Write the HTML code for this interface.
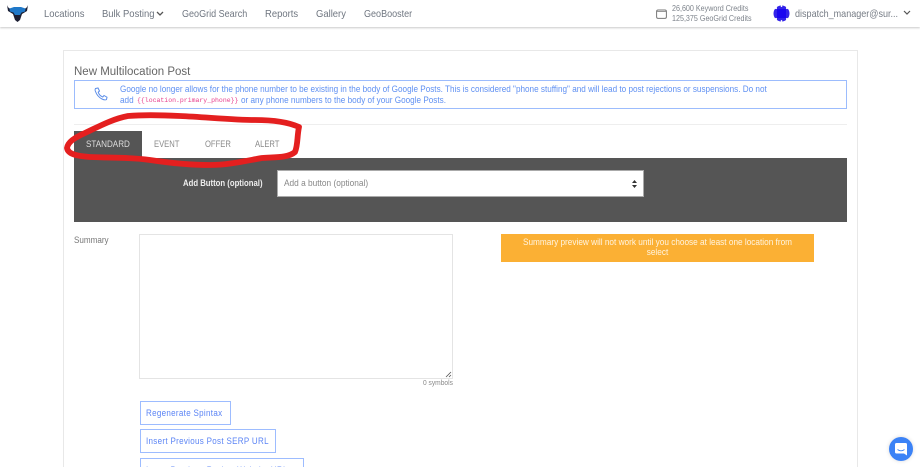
<!DOCTYPE html>
<html><head><meta charset="utf-8"><style>
html,body{margin:0;padding:0;width:920px;height:467px;overflow:hidden;background:#fff}
body{font-family:"Liberation Sans",sans-serif;position:relative}
.a{position:absolute;white-space:nowrap}
.n{top:8px;font-size:10.500px;line-height:12px;color:#6f7680;transform:scaleX(.9);transform-origin:0 50%}
.t{top:139px;font-size:9.200px;line-height:11px;color:#8a8a8a;transform:scaleX(.83);transform-origin:0 50%}
.b{border:1.500px solid #9dbcff;box-sizing:border-box;background:#fff}
.b span{position:absolute;left:4.500px;top:4.500px;line-height:12px;color:#5b84f5;font-size:9px;letter-spacing:.35px;transform:scaleX(.89);transform-origin:0 50%}
.m{font-size:9.250px;line-height:11px;color:#5f90f2;transform:scaleX(.882);transform-origin:0 50%}
#w{position:absolute;left:0;top:0;width:920px;height:467px;filter:blur(.35px)}
</style></head><body><div id="w">
<div class="a" style="left:0;top:0;width:920px;height:27px;background:#fff;box-shadow:0 1px 2px rgba(0,0,0,.22)"></div>
<svg class="a" style="left:7px;top:5px" width="21" height="17" viewBox="0 0 21 17"><path d="M0 0 C1 3 3 4 5 4 L16 4 C18 4 20 3 21 0 L20 6 L15 9 L13 15 L10.500 17 L8 15 L6 9 L1 6Z" fill="#1c1f33"/><path d="M2.500 3.500 L7 2 L14 2 L18.500 3.500 L18 6.500 L14.500 7.500 L13 10 L8 10 L6.500 7.500 L3 6.500Z" fill="#1f78c8"/></svg>
<div class="a n" style="left:44px">Locations</div>
<div class="a n" style="left:102px">Bulk Posting</div>
<svg class="a" style="left:156px;top:11px" width="8" height="6"><path d="M1 1 L4 4 L7 1" fill="none" stroke="#555" stroke-width="1.300"/></svg>
<div class="a n" style="left:182px;transform:scaleX(.86)">GeoGrid Search</div>
<div class="a n" style="left:265px">Reports</div>
<div class="a n" style="left:316px">Gallery</div>
<div class="a n" style="left:364px;transform:scaleX(.86)">GeoBooster</div>
<svg class="a" style="left:656px;top:9px" width="11" height="10"><rect x=".6" y="1" width="9.800" height="8.400" rx="1.500" fill="none" stroke="#777" stroke-width="1"/><path d="M1 2.500H10" stroke="#999"/></svg>
<div class="a" style="left:672px;top:3.500px;font-size:8px;line-height:10px;color:#7d838b;transform:scaleX(.895);transform-origin:0 50%">26,600 Keyword Credits<br>125,375 GeoGrid Credits</div>
<svg class="a" style="left:773px;top:5px" width="17" height="17"><circle cx="8.500" cy="8.500" r="8" fill="#3324e8"/><circle cx="3" cy="3" r="1.100" fill="#fff"/><circle cx="14" cy="3" r="1.100" fill="#fff"/><circle cx="3" cy="14" r="1.100" fill="#fff"/><circle cx="14" cy="14" r="1.100" fill="#fff"/><circle cx="8.500" cy="1.200" r=".8" fill="#fff"/><circle cx="8.500" cy="15.800" r=".8" fill="#fff"/><rect x="4" y="4" width="9" height="9" fill="#1a06f0"/></svg>
<div class="a" style="left:795px;top:8px;font-size:10.500px;line-height:12px;color:#757b84;transform:scaleX(.86);transform-origin:0 50%">dispatch_manager@sur...</div>
<svg class="a" style="left:903px;top:10px" width="8" height="6"><path d="M1 1 L4 4 L7 1" fill="none" stroke="#555" stroke-width="1.200"/></svg>

<div class="a" style="left:63px;top:50px;width:795px;height:430px;border:1px solid #e8e8e8;box-sizing:border-box;background:#fff"></div>
<div class="a" style="left:74px;top:65px;font-size:11.500px;line-height:14px;color:#666">New Multilocation Post</div>
<div class="a" style="left:74px;top:80px;width:773px;height:29px;border:1px solid #9cbcfd;box-sizing:border-box"></div>
<svg class="a" style="left:94px;top:87px" width="14" height="14" viewBox="0 0 14 14"><path d="M1.500 1.500 L4 1 L5.500 4 L4.200 5.200 C5 7.500 6.500 9.200 8.800 10 L10 8.500 L13 10.200 L12.500 12.500 C11.500 13.300 10 13 8 12 C4.500 10.300 2.500 7.500 1.300 4 C1 3 1 2.200 1.500 1.500Z" fill="none" stroke="#5b8de8" stroke-width="1"/></svg>
<div class="a m" style="left:120px;top:84px">Google no longer allows for the phone number to be existing in the body of Google Posts. This is considered "phone stuffing" and will lead to post rejections or suspensions. Do not</div>
<div class="a m" style="left:120px;top:95px">add</div>
<div class="a" style="left:137px;top:95px;font-family:'Liberation Mono',monospace;font-size:6.500px;line-height:11px;color:#e83e8c">{{location.primary_phone}}</div>
<div class="a m" style="left:241px;top:95px">or any phone numbers to the body of your Google Posts.</div>
<div class="a" style="left:74px;top:124px;width:773px;height:1px;background:#eee"></div>

<div class="a" style="left:74px;top:131px;width:68px;height:28px;background:#555"></div>
<div class="a t" style="left:86px;color:#ddd;transform:scaleX(.88)">STANDARD</div>
<div class="a t" style="left:154px">EVENT</div>
<div class="a t" style="left:205px">OFFER</div>
<div class="a t" style="left:255px">ALERT</div>
<div class="a" style="left:74px;top:158px;width:773px;height:64px;background:#555"></div>
<div class="a" style="left:183px;top:177px;font-size:9px;line-height:12px;color:#eee;font-weight:bold;transform:scaleX(.86);transform-origin:0 50%">Add Button (optional)</div>
<div class="a" style="left:277px;top:170px;width:367px;height:27px;background:#fff;border:1px solid #aaa;box-sizing:border-box"></div>
<div class="a" style="left:284px;top:177.500px;font-size:9.500px;line-height:12px;color:#888;transform:scaleX(.875);transform-origin:0 50%">Add a button (optional)</div>
<svg class="a" style="left:632px;top:180px" width="5" height="8"><path d="M2.500 0L5 3H0ZM2.500 8L0 5H5Z" fill="#333"/></svg>

<div class="a" style="left:74px;top:233.500px;font-size:9.200px;line-height:12px;color:#777;transform:scaleX(.88);transform-origin:0 50%">Summary</div>
<div class="a" style="left:139px;top:234px;width:314px;height:145px;border:1px solid #e4e4e4;box-sizing:border-box"></div>
<svg class="a" style="left:445px;top:371px" width="7" height="7"><path d="M1 6 L6 1 M4 6 L6 4" stroke="#555" stroke-width=".8"/></svg>
<div class="a" style="left:423px;top:378px;font-size:7.300px;line-height:10px;color:#888;transform:scaleX(.91);transform-origin:0 50%">0 symbols</div>
<div class="a" style="left:501px;top:234px;width:313px;height:28px;background:#fbb034"></div>
<div class="a" style="left:501px;top:237px;width:313px;color:#fff4e0;font-size:9.250px;line-height:10px;text-align:center;transform:scaleX(.89)">Summary preview will not work until you choose at least one location from<br>select</div>

<div class="a b" style="left:140px;top:401px;width:91px;height:24px"><span>Regenerate Spintax</span></div>
<div class="a b" style="left:140px;top:429px;width:136px;height:24px"><span>Insert Previous Post SERP URL</span></div>
<div class="a b" style="left:140px;top:458px;width:164px;height:24px"><span>Insert Previous Review Website URL</span></div>

<svg class="a" style="left:0;top:0;overflow:visible" width="920" height="467"><path d="M299 127 C288 122 272 120 255 120 C232 120 205 117 180 116 C160 115 140 115 128 116 C112 119 98 127 85 133 C74 138 68 142 67 148 C68 154 76 156 90 157 C110 158 130 157 150 160 C170 163 190 165 210 165 C228 165 245 161 262 158 C275 157 288 158 295 152 C298 145 297 136 299 127Z" fill="none" stroke="#e41f1f" stroke-width="5.800" stroke-linejoin="round"/></svg>

<div class="a" style="left:889px;top:437px;width:24px;height:24px;border-radius:50%;background:#3b82f6;box-shadow:0 0 4px rgba(0,0,0,.15)"></div>
<svg class="a" style="left:895px;top:443px" width="12" height="13"><path d="M1.500 0H10.500A1.500 1.500 0 0 1 12 1.500V12.500L9 10.500H1.500A1.500 1.500 0 0 1 0 9V1.500A1.500 1.500 0 0 1 1.500 0Z" fill="#fff"/><path d="M2.500 6.500C4.500 8.200 7.500 8.200 9.500 6.500" fill="none" stroke="#3b82f6" stroke-width=".9"/></svg>
</div></body></html>
